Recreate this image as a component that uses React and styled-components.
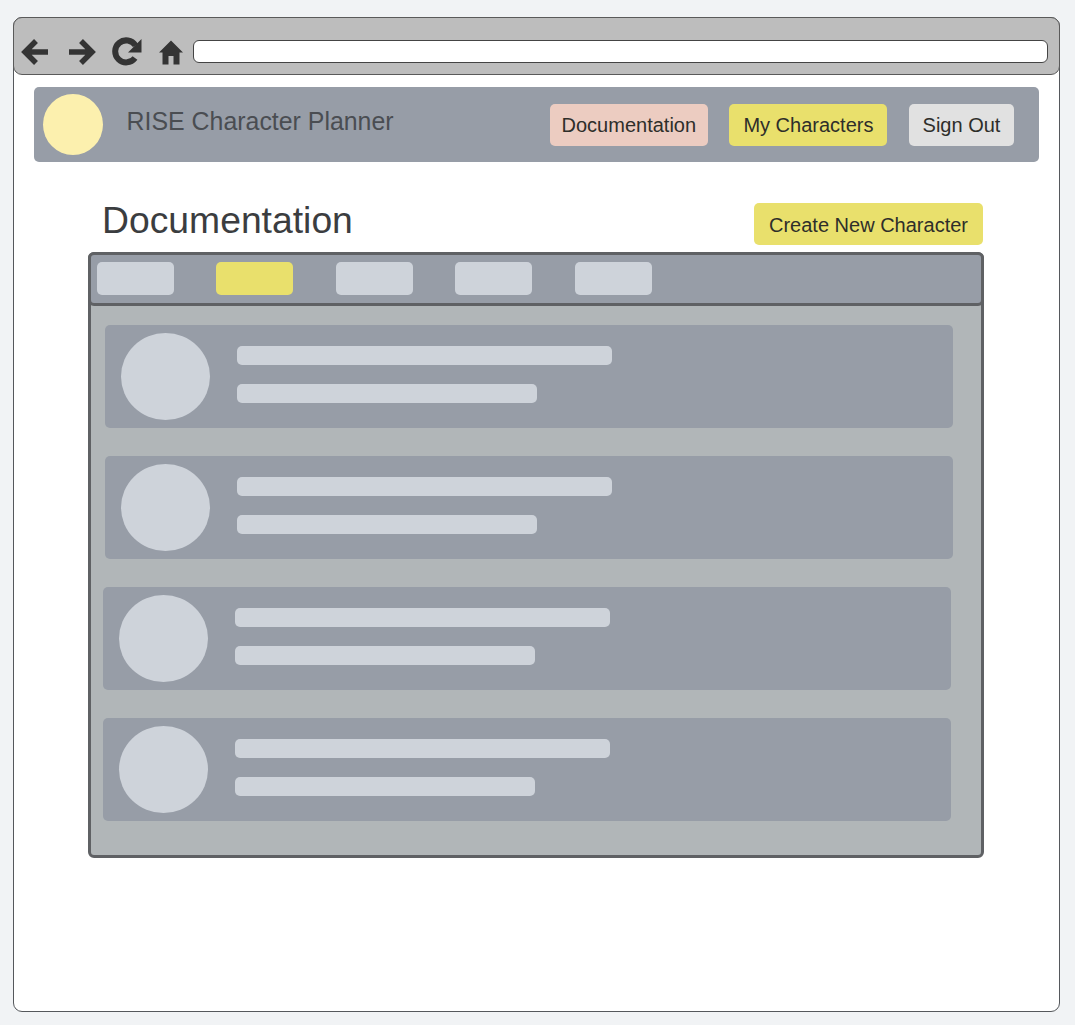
import React from 'react'
import styled, { createGlobalStyle } from 'styled-components'

const GlobalStyle = createGlobalStyle`
  html, body {
    margin: 0;
    background: #f1f3f5;
    font-family: "Liberation Sans", Arial, sans-serif;
  }
`

const tabs = [false, true, false, false, false]
const cards = [false, false, true, true]

function BackIcon() {
  return (
    <svg width="28" height="28" viewBox="0 0 28 28">
      <path d="M15 3 L4 14 L15 25 M5 14 H27" fill="none" stroke="#343434" strokeWidth="5.5" />
    </svg>
  )
}

function ForwardIcon() {
  return (
    <svg width="28" height="28" viewBox="0 0 28 28">
      <path d="M13 3 L24 14 L13 25 M23 14 H1" fill="none" stroke="#343434" strokeWidth="5.5" />
    </svg>
  )
}

function ReloadIcon() {
  return (
    <svg width="30" height="30" viewBox="0 0 30 30">
      <path d="M23 21 A11 11 0 1 1 23.5 8.5" fill="none" stroke="#343434" strokeWidth="6" />
      <path d="M29.5 2 V15.5 H16 Z" fill="#343434" />
    </svg>
  )
}

function HomeIcon() {
  return (
    <svg width="26" height="26" viewBox="0 0 26 26">
      <path d="M13 1.5 L25 13.5 H21.5 V25.5 H15.5 V17 H10.5 V25.5 H4.5 V13.5 H1 Z" fill="#343434" />
    </svg>
  )
}

export default function App() {
  return (
    <Page>
      <GlobalStyle />
      <Browser>
        <Toolbar>
          <IconSlot $width={47}><BackIcon /></IconSlot>
          <IconSlot $width={44}><ForwardIcon /></IconSlot>
          <IconSlot $width={46}><ReloadIcon /></IconSlot>
          <IconSlot $width={35}><HomeIcon /></IconSlot>
          <Address />
        </Toolbar>
        <Content>
          <Nav>
            <Logo />
            <Brand>RISE Character Planner</Brand>
            <NavButton $bg="#ecccc1" $width={158}>Documentation</NavButton>
            <NavButton $bg="#e9e06c" $width={158}>My Characters</NavButton>
            <NavButton $bg="#e1e1e1" $width={105}>Sign Out</NavButton>
          </Nav>
          <Heading>
            <Title>Documentation</Title>
            <NavButton $bg="#e9e06c" $width={229}>Create New Character</NavButton>
          </Heading>
          <Panel>
            <TabBar>
              {tabs.map((active, i) => <Tab key={i} $active={active} />)}
            </TabBar>
            <CardList>
              {cards.map((shifted, i) => (
                <Card key={i} $shifted={shifted}>
                  <Avatar />
                  <Lines>
                    <Line $width={375} />
                    <Line $width={300} />
                  </Lines>
                </Card>
              ))}
            </CardList>
          </Panel>
        </Content>
      </Browser>
    </Page>
  )
}

const Page = styled.div`
  box-sizing: border-box;
  height: 1025px;
  padding: 17px 15px 13px 13px;
`
const Browser = styled.div`
  box-sizing: border-box;
  height: 995px;
  background: #fff;
  border: 1px solid #55585c;
  border-radius: 9px;
`
const Toolbar = styled.div`
  box-sizing: border-box;
  height: 58px;
  margin: -1px -1px 0;
  padding: 11px 11px 0 7px;
  display: flex;
  align-items: center;
  background: #bdbdbd;
  border: 1px solid #5a5a5a;
  border-radius: 9px;
`
const IconSlot = styled.div`
  width: ${p => p.$width}px;
  flex: none;
  display: flex;
  justify-content: flex-start;
  align-items: center;
`
const Address = styled.div`
  flex: 1;
  box-sizing: border-box;
  height: 23px;
  background: #fff;
  border: 1px solid #444;
  border-radius: 6px;
`
const Content = styled.div`
  padding: 12px 20px 0 20px;
`
const Nav = styled.div`
  box-sizing: border-box;
  height: 75px;
  padding: 0 25px 0 9px;
  display: flex;
  align-items: center;
  gap: 21.6px;
  background: #979da7;
  border-radius: 5px;
`
const Logo = styled.div`
  width: 60px;
  height: 61px;
  flex: none;
  border-radius: 50%;
  background: #fcf0ae;
`
const Brand = styled.div`
  flex: 1;
  margin: 0 0 7px 2px;
  font-size: 24.9px;
  color: #4a4d52;
`
const NavButton = styled.div`
  box-sizing: border-box;
  width: ${p => p.$width}px;
  height: 42px;
  padding-top: 2px;
  flex: none;
  display: flex;
  align-items: center;
  justify-content: center;
  background: ${p => p.$bg};
  border-radius: 5px;
  font-size: 20px;
  color: #2e2e2a;
`
const Heading = styled.div`
  display: flex;
  align-items: center;
  justify-content: space-between;
  margin: 41px 56px 7px 68px;
  height: 42px;
`
const Title = styled.h1`
  margin: 0 0 8px 0;
  font-size: 37.3px;
  font-weight: 400;
  color: #3b3d40;
`
const Panel = styled.div`
  box-sizing: border-box;
  width: 896px;
  height: 606px;
  margin-left: 54px;
  background: #b1b6b8;
  border: 3px solid #5f6164;
  border-radius: 6px;
`
const TabBar = styled.div`
  box-sizing: border-box;
  height: 54px;
  margin: -3px -3px 0;
  padding: 7px 0 0 6px;
  display: flex;
  gap: 42.4px;
  background: #979da7;
  border: 3px solid #5f6164;
  border-radius: 6px;
`
const Tab = styled.div`
  width: 77px;
  height: 33px;
  background: ${p => (p.$active ? '#e9e06c' : '#ced3da')};
  border-radius: 5px;
`
const CardList = styled.div`
  padding: 19px 0 0 14px;
  display: flex;
  flex-direction: column;
  gap: 28px;
`
const Card = styled.div`
  box-sizing: border-box;
  width: 848px;
  height: 103px;
  margin-left: ${p => (p.$shifted ? '-2px' : '0')};
  padding: 0 0 0 16px;
  display: flex;
  align-items: center;
  gap: 27px;
  background: #979da7;
  border-radius: 5px;
`
const Avatar = styled.div`
  width: 89px;
  height: 87px;
  flex: none;
  border-radius: 50%;
  background: #ced3da;
`
const Lines = styled.div`
  display: flex;
  flex-direction: column;
  gap: 19px;
  margin-bottom: 4px;
`
const Line = styled.div`
  width: ${p => p.$width}px;
  height: 19px;
  background: #ced3da;
  border-radius: 5px;
`
